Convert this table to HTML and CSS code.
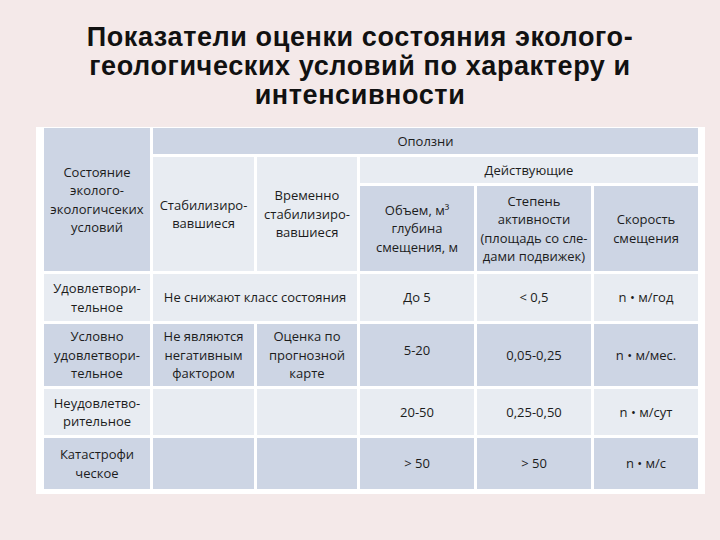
FILE: index.html
```html
<!DOCTYPE html>
<html lang="ru">
<head>
<meta charset="utf-8">
<title>Показатели оценки</title>
<link rel="stylesheet" href="styles.css">
</head>
<body>
<h1 class="title">Показатели оценки состояния эколого-<br>геологических условий по характеру и<br>интенсивности</h1>
<div class="panel">
  <div class="grid">
    <div class="cell dark span-r3">Состояние<br>эколого-<br>экологичсеких<br>условий</div>
    <div class="cell dark span-c5">Оползни</div>
    <div class="cell light span-r2">Стабилизиро-<br>вавшиеся</div>
    <div class="cell light span-r2">Временно<br>стабилизиро-<br>вавшиеся</div>
    <div class="cell light span-c3">Действующие</div>
    <div class="cell dark">Объем, м³<br>глубина<br>смещения, м</div>
    <div class="cell dark">Степень<br>активности<br>(площадь со сле-<br>дами подвижек)</div>
    <div class="cell dark">Скорость<br>смещения</div>

    <div class="cell light">Удовлетвори-<br>тельное</div>
    <div class="cell light span-c2">Не снижают класс состояния</div>
    <div class="cell light">До 5</div>
    <div class="cell light">&lt; 0,5</div>
    <div class="cell light">n • м/год</div>

    <div class="cell dark">Условно<br>удовлетвори-<br>тельное</div>
    <div class="cell dark">Не являются<br>негативным<br>фактором</div>
    <div class="cell dark">Оценка по<br>прогнозной<br>карте</div>
    <div class="cell dark up">5-20</div>
    <div class="cell dark">0,05-0,25</div>
    <div class="cell dark">n • м/мес.</div>

    <div class="cell light">Неудовлетво-<br>рительное</div>
    <div class="cell light"></div>
    <div class="cell light"></div>
    <div class="cell light">20-50</div>
    <div class="cell light">0,25-0,50</div>
    <div class="cell light">n • м/сут</div>

    <div class="cell dark">Катастрофи<br>ческое</div>
    <div class="cell dark"></div>
    <div class="cell dark"></div>
    <div class="cell dark">&gt; 50</div>
    <div class="cell dark">&gt; 50</div>
    <div class="cell dark">n • м/с</div>
  </div>
</div>
</body>
</html>
```
FILE: styles.css
```css
html, body {
  margin: 0;
  padding: 0;
}
body {
  background: #f4e9e9;
  width: 720px;
  height: 540px;
  overflow: hidden;
  font-family: "Open Sans", "Noto Sans", sans-serif;
}
.title {
  margin: 0;
  padding-top: 23px;
  font-family: "Liberation Sans", Arial, sans-serif;
  font-weight: bold;
  font-size: 27px;
  line-height: 29px;
  text-align: center;
  color: #111;
  letter-spacing: 0.6px;
}
.panel {
  margin: 17px 0 0 36px;
  width: 654px;
  padding: 1px 7px 5px 8px;
  background: #ffffff;
}
.grid {
  display: grid;
  grid-template-columns: 106px 101px 100px 114px 114px 104px;
  grid-template-rows: 26px 26px 85px 47px 62px 46px 51px;
  gap: 3px;
}
.cell {
  display: flex;
  align-items: center;
  justify-content: center;
  text-align: center;
  font-size: 13px;
  line-height: 18.5px;
  color: #1c1c1c;
}
.dark {
  background: #cdd5e4;
}
.light {
  background: #e8ecf2;
}
.span-r3 {
  grid-row: span 3;
}
.span-r2 {
  grid-row: span 2;
}
.span-c5 {
  grid-column: span 5;
}
.span-c3 {
  grid-column: span 3;
}
.span-c2 {
  grid-column: span 2;
}
.up {
  padding-bottom: 10px;
}
```
